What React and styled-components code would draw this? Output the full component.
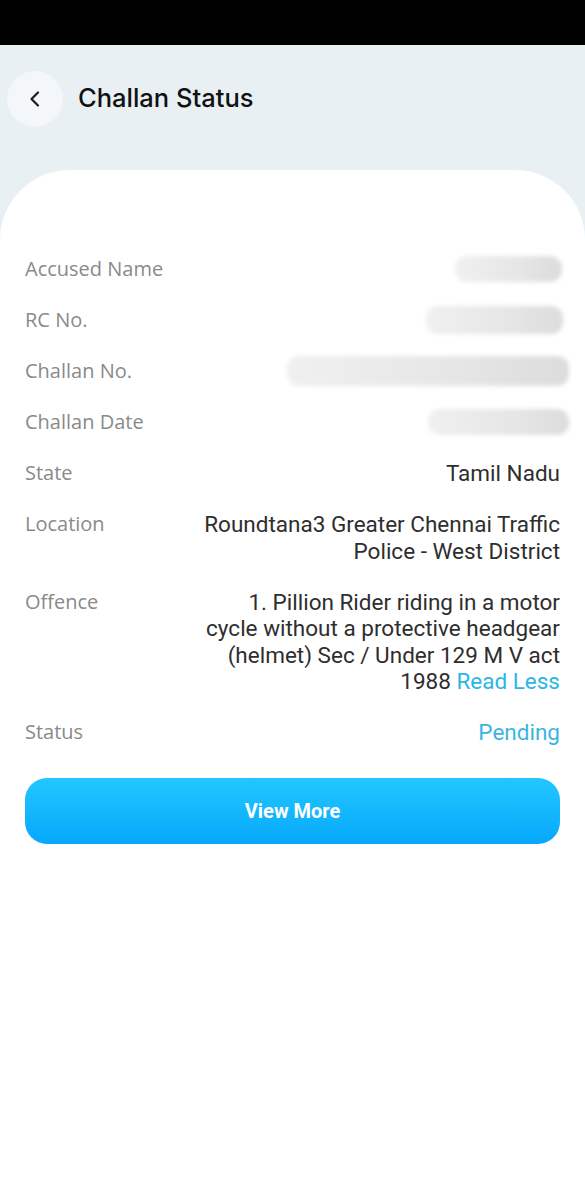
import styled, { createGlobalStyle } from "styled-components";

const GlobalStyle = createGlobalStyle`
    body {
        margin: 0;
        background: #ffffff;
    }
`;

const StatusBar = styled.div`
    height: 45px;
    background: #000000;
`;

const Screen = styled.div`
    display: flex;
    flex-direction: column;
    min-height: 1155px;
    background: #e8f0f4;
`;

const TopBar = styled.div`
    display: flex;
    align-items: center;
    padding: 26px 0 0 7px;
`;

const BackButton = styled.button`
    display: flex;
    align-items: center;
    justify-content: center;
    width: 56px;
    height: 56px;
    border: 0;
    border-radius: 50%;
    background: #f4f7f9;
    padding: 0;
`;

const Title = styled.h1`
    margin: -4px 0 0 15px;
    font-family: Inter, "Noto Sans", sans-serif;
    font-weight: 500;
    font-size: 25.5px;
    color: #111111;
`;

const Card = styled.div`
    flex: 1;
    margin-top: 43px;
    padding: 86px 25px 0;
    background: #ffffff;
    border-radius: 70px 70px 0 0;
`;

const Rows = styled.div`
    display: flex;
    flex-direction: column;
    gap: 24.5px;
`;

const Row = styled.div`
    display: flex;
    justify-content: space-between;
    align-items: flex-start;
`;

const Label = styled.span`
    font-family: "Open Sans", "Noto Sans", sans-serif;
    font-size: 20px;
    line-height: 26.5px;
    color: #8a8a8a;
    white-space: nowrap;
`;

const Value = styled.span`
    font-family: Roboto, sans-serif;
    font-size: 22.5px;
    line-height: 26.5px;
    text-align: right;
    color: ${(p) => (p.$accent ? "#3cb4e2" : "#2e2e2e")};
`;

const Link = styled.span`
    color: #2bb6e6;
`;

const Redacted = styled.div`
    width: ${(p) => p.$w}px;
    height: ${(p) => p.$h || 26}px;
    margin: ${(p) => (26.5 - (p.$h || 26)) / 2}px ${(p) => p.$shift || 0}px ${(p) => (26.5 - (p.$h || 26)) / 2}px 0;
    border-radius: 12px;
    background: linear-gradient(90deg, #f0f0f0, #e6e6e6 60%, #dcdcdc);
    filter: blur(2px);
`;

const ViewMore = styled.button`
    width: 100%;
    height: 66px;
    margin-top: 32px;
    border: 0;
    border-radius: 22px;
    background: linear-gradient(180deg, #22c7ff, #07a8fc);
    font-family: Roboto, sans-serif;
    font-weight: 700;
    font-size: 20px;
    color: #ffffff;
`;

function Chevron() {
    return (
        <svg width="16" height="18" viewBox="0 0 16 18" fill="none">
            <path d="M11 2.5L4.5 9L11 15.5" stroke="#1c1c1c" strokeWidth="2.2" strokeLinecap="round" strokeLinejoin="round" />
        </svg>
    );
}

export default function App() {
    return (
        <>
            <GlobalStyle />
            <StatusBar />
            <Screen>
                <TopBar>
                    <BackButton>
                        <Chevron />
                    </BackButton>
                    <Title>Challan Status</Title>
                </TopBar>
                <Card>
                    <Rows>
                        <Row>
                            <Label>Accused Name</Label>
                            <Redacted $w={107} $shift={-2} />
                        </Row>
                        <Row>
                            <Label>RC No.</Label>
                            <Redacted $w={137} $h={28} $shift={-3} />
                        </Row>
                        <Row>
                            <Label>Challan No.</Label>
                            <Redacted $w={282} $h={30} $shift={-9} />
                        </Row>
                        <Row>
                            <Label>Challan Date</Label>
                            <Redacted $w={141} $shift={-9} />
                        </Row>
                        <Row>
                            <Label>State</Label>
                            <Value>Tamil Nadu</Value>
                        </Row>
                        <Row>
                            <Label>Location</Label>
                            <Value>
                                Roundtana3 Greater Chennai Traffic
                                <br />
                                Police - West District
                            </Value>
                        </Row>
                        <Row>
                            <Label>Offence</Label>
                            <Value>
                                1. Pillion Rider riding in a motor
                                <br />
                                cycle without a protective headgear
                                <br />
                                (helmet) Sec / Under 129 M V act
                                <br />
                                1988 <Link>Read Less</Link>
                            </Value>
                        </Row>
                        <Row>
                            <Label>Status</Label>
                            <Value $accent>Pending</Value>
                        </Row>
                    </Rows>
                    <ViewMore>View More</ViewMore>
                </Card>
            </Screen>
        </>
    );
}
